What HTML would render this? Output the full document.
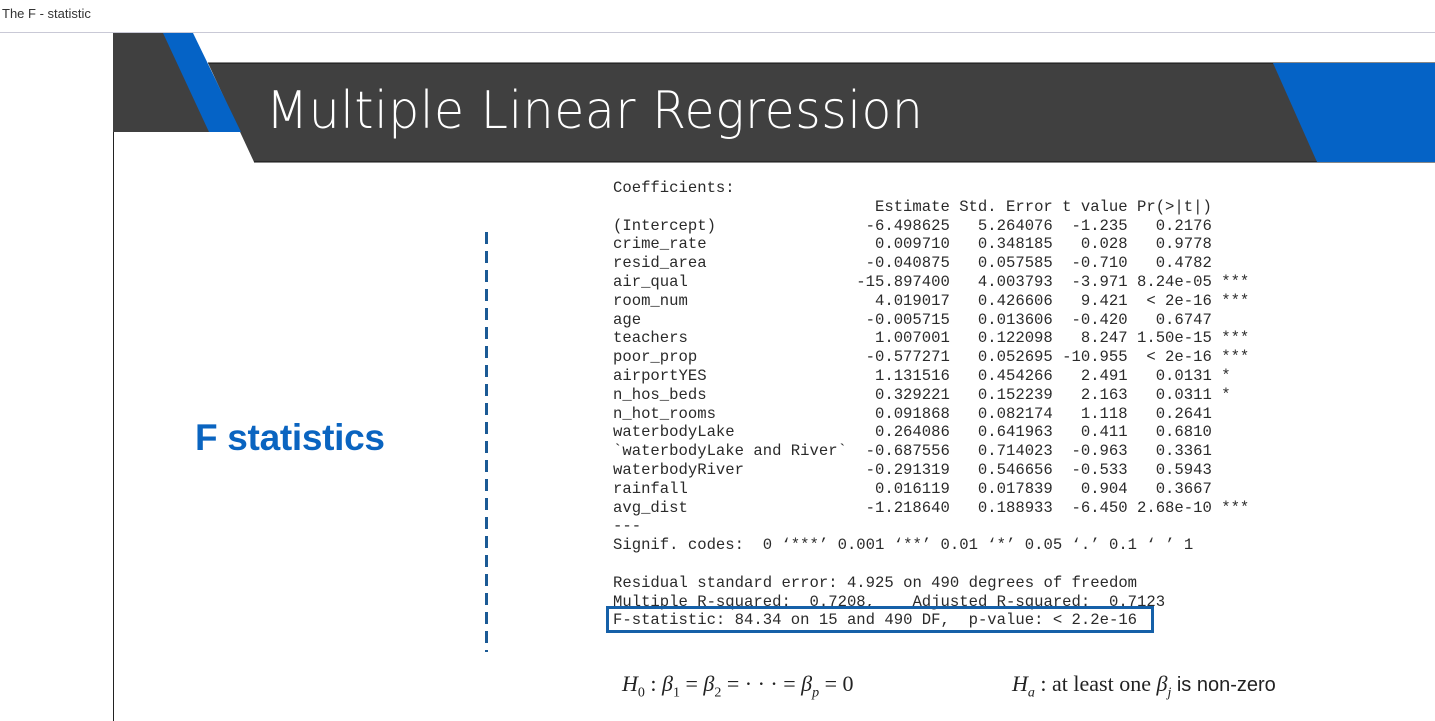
<!DOCTYPE html>
<html><head><meta charset="utf-8"><style>
*{margin:0;padding:0;box-sizing:border-box}
body{width:1435px;height:721px;overflow:hidden;background:#fff;position:relative;font-family:"Liberation Sans",sans-serif}
.top{position:absolute;left:2px;top:6px;font-size:13px;color:#333}
.hr{position:absolute;left:0;top:32px;width:1435px;height:1px;background:#c9c9d6}
svg.hd{position:absolute;left:0;top:0}
.vl{position:absolute;left:113px;top:132px;width:1px;height:589px;background:#222}
.title{position:absolute;left:266px;top:81px;font-size:52px;color:#fff;letter-spacing:0.6px;font-family:"DejaVu Sans","Liberation Sans",sans-serif;font-weight:300;transform:scaleX(0.94);transform-origin:left}
.fst{position:absolute;left:195px;top:417px;font-size:37px;font-weight:bold;color:#0a64c0;letter-spacing:-0.3px}
.dash{position:absolute;left:485px;top:232px;width:3px;height:420px;background:repeating-linear-gradient(to bottom,#1b5a95 0 12px,transparent 12px 19px)}
.code{position:absolute;left:613px;top:179px;font-family:"Liberation Mono",monospace;font-size:15.6px;line-height:18.8px;color:#2a2a2a;white-space:pre}
.r span{display:inline-block;text-align:right}
.n{width:25ch;text-align:left!important}
.a{width:11ch}.b{width:8ch}.c{width:9ch}
.box{position:absolute;left:606px;top:606px;width:548px;height:27px;border:3px solid #1560a8}
.m{position:absolute;top:671px;font-family:"Liberation Serif",serif;font-size:22px;color:#222}
</style></head><body>
<div class="top">The F - statistic</div>
<div class="hr"></div>
<svg class="hd" width="1435" height="170">
<polygon points="113,33 175,33 221,132 113,132" fill="#404040"/>
<polygon points="208,63 1435,63 1435,162 254,162" fill="#404040"/>
<line x1="208" y1="63" x2="1435" y2="63" stroke="#111" stroke-width="1"/>
<line x1="254" y1="162" x2="1435" y2="162" stroke="#111" stroke-width="1"/>
<polygon points="163,33 193,33 241,132 209,132" fill="#0563c6"/>
<polygon points="1273,63 1435,63 1435,162 1317,162" fill="#0563c6"/>
</svg>
<div class="vl"></div>
<div class="title">Multiple Linear Regression</div>
<div class="fst">F statistics</div>
<div class="dash"></div>
<div class="code">Coefficients:
<div class="r"><span class="n"></span><span class="a">Estimate</span><span class="a">Std. Error</span><span class="b">t value</span><span class="c">Pr(&gt;|t|)</span></div><div class="r"><span class="n">(Intercept)</span><span class="a">-6.498625</span><span class="a">5.264076</span><span class="b">-1.235</span><span class="c">0.2176</span></div><div class="r"><span class="n">crime_rate</span><span class="a">0.009710</span><span class="a">0.348185</span><span class="b">0.028</span><span class="c">0.9778</span></div><div class="r"><span class="n">resid_area</span><span class="a">-0.040875</span><span class="a">0.057585</span><span class="b">-0.710</span><span class="c">0.4782</span></div><div class="r"><span class="n">air_qual</span><span class="a">-15.897400</span><span class="a">4.003793</span><span class="b">-3.971</span><span class="c">8.24e-05</span> ***</div><div class="r"><span class="n">room_num</span><span class="a">4.019017</span><span class="a">0.426606</span><span class="b">9.421</span><span class="c">&lt; 2e-16</span> ***</div><div class="r"><span class="n">age</span><span class="a">-0.005715</span><span class="a">0.013606</span><span class="b">-0.420</span><span class="c">0.6747</span></div><div class="r"><span class="n">teachers</span><span class="a">1.007001</span><span class="a">0.122098</span><span class="b">8.247</span><span class="c">1.50e-15</span> ***</div><div class="r"><span class="n">poor_prop</span><span class="a">-0.577271</span><span class="a">0.052695</span><span class="b">-10.955</span><span class="c">&lt; 2e-16</span> ***</div><div class="r"><span class="n">airportYES</span><span class="a">1.131516</span><span class="a">0.454266</span><span class="b">2.491</span><span class="c">0.0131</span> *</div><div class="r"><span class="n">n_hos_beds</span><span class="a">0.329221</span><span class="a">0.152239</span><span class="b">2.163</span><span class="c">0.0311</span> *</div><div class="r"><span class="n">n_hot_rooms</span><span class="a">0.091868</span><span class="a">0.082174</span><span class="b">1.118</span><span class="c">0.2641</span></div><div class="r"><span class="n">waterbodyLake</span><span class="a">0.264086</span><span class="a">0.641963</span><span class="b">0.411</span><span class="c">0.6810</span></div><div class="r"><span class="n">`waterbodyLake and River`</span><span class="a">-0.687556</span><span class="a">0.714023</span><span class="b">-0.963</span><span class="c">0.3361</span></div><div class="r"><span class="n">waterbodyRiver</span><span class="a">-0.291319</span><span class="a">0.546656</span><span class="b">-0.533</span><span class="c">0.5943</span></div><div class="r"><span class="n">rainfall</span><span class="a">0.016119</span><span class="a">0.017839</span><span class="b">0.904</span><span class="c">0.3667</span></div><div class="r"><span class="n">avg_dist</span><span class="a">-1.218640</span><span class="a">0.188933</span><span class="b">-6.450</span><span class="c">2.68e-10</span> ***</div>---
Signif. codes:  0 ‘***’ 0.001 ‘**’ 0.01 ‘*’ 0.05 ‘.’ 0.1 ‘ ’ 1

Residual standard error: 4.925 on 490 degrees of freedom
Multiple R-squared:  0.7208,    Adjusted R-squared:  0.7123
F-statistic: 84.34 on 15 and 490 DF,  p-value: &lt; 2.2e-16</div>
<div class="box"></div>
<div class="m" style="left:622px"><i>H</i><sub style="font-size:14px">0</sub> : <i>β</i><sub style="font-size:14px">1</sub> = <i>β</i><sub style="font-size:14px">2</sub> = · · · = <i>β<sub style="font-size:14px">p</sub></i> = 0</div>
<div class="m" style="left:1012px"><i>H<sub style="font-size:14px">a</sub></i> :  at least one <i>β<sub style="font-size:14px">j</sub></i> <span style="font-family:'Liberation Sans',sans-serif;font-size:20px">is non-zero</span></div>
</body></html>
